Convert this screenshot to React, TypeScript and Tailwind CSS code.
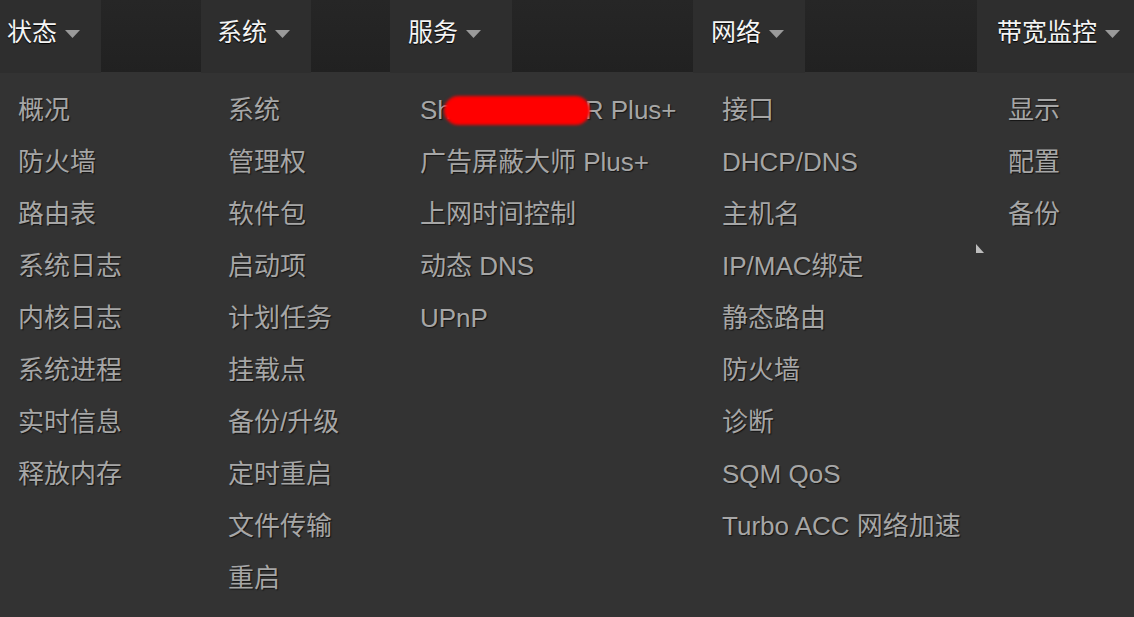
const font = "font-['Liberation_Sans','Noto_Sans_CJK_SC',sans-serif]";

const tabs = [
  { label: "状态", width: "w-[101px]", pad: "pl-[7px]" },
  { gap: "w-[100px]" },
  { label: "系统", width: "w-[110px]", pad: "pl-[16px]" },
  { gap: "w-[79px]" },
  { label: "服务", width: "w-[122px]", pad: "pl-[18px]" },
  { gap: "w-[181px]" },
  { label: "网络", width: "w-[112px]", pad: "pl-[18px]" },
  { gap: "w-[172px]" },
  { label: "带宽监控", width: "w-[157px]", pad: "pl-[20px]" },
];

const columns = [
  {
    width: "w-[210px]",
    items: ["概况", "防火墙", "路由表", "系统日志", "内核日志", "系统进程", "实时信息", "释放内存"],
  },
  {
    width: "w-[192px]",
    items: ["系统", "管理权", "软件包", "启动项", "计划任务", "挂载点", "备份/升级", "定时重启", "文件传输", "重启"],
  },
  {
    width: "w-[302px]",
    items: ["ShadowSocksR Plus+", "广告屏蔽大师 Plus+", "上网时间控制", "动态 DNS", "UPnP"],
  },
  {
    width: "w-[286px]",
    items: ["接口", "DHCP/DNS", "主机名", "IP/MAC绑定", "静态路由", "防火墙", "诊断", "SQM QoS", "Turbo ACC 网络加速"],
  },
  {
    width: "w-[120px]",
    items: ["显示", "配置", "备份"],
  },
];

// small caret like the one in the header
const Caret = () => (
  <svg width="15" height="8" viewBox="0 0 15 8" className="ml-[8px] mt-[2px]">
    <polygon points="0,0 15,0 7.5,8" fill="#9a9a9a" />
  </svg>
);

export default function App() {
  return (
    <div className={`relative w-[1134px] h-[617px] overflow-hidden bg-[#333333] ${font}`}>
      {/* top nav */}
      <div className="flex h-[72px] bg-[#232323]">
        {tabs.map((t, i) =>
          t.label ? (
            <div
              key={i}
              className={`${t.width} ${t.pad} h-[73px] flex items-center bg-[#2e2e2e] pb-[8px] text-[25px] text-[#f4f4f4] [text-shadow:0_1px_1px_#000]`}
            >
              {t.label}
              <Caret />
            </div>
          ) : (
            <div key={i} className={`${t.gap} h-full bg-gradient-to-b from-[#262626] to-[#212121]`} />
          ),
        )}
      </div>

      {/* dropdown columns */}
      <div className="flex pl-[18px] pt-[12px]">
        {columns.map((col, ci) => (
          <ul key={ci} className={`${col.width} flex flex-col`}>
            {col.items.map((item) => (
              <li
                key={item}
                className="relative h-[52px] flex items-center text-[26px] leading-none text-[#a6a6a6] [text-shadow:1px_1px_1px_#141414] whitespace-nowrap"
              >
                {item}
                {item === "ShadowSocksR Plus+" && (
                  <span className="absolute left-[24px] top-[12px] w-[146px] h-[29px] rounded-full bg-[#ff0000] blur-[1.5px]" />
                )}
              </li>
            ))}
          </ul>
        ))}
      </div>

      {/* stray cursor mark */}
      <svg className="absolute left-[976px] top-[244px]" width="9" height="9" viewBox="0 0 9 9">
        <polygon points="0,0 0,9 8,9" fill="#bdbdbd" />
      </svg>
    </div>
  );
}
